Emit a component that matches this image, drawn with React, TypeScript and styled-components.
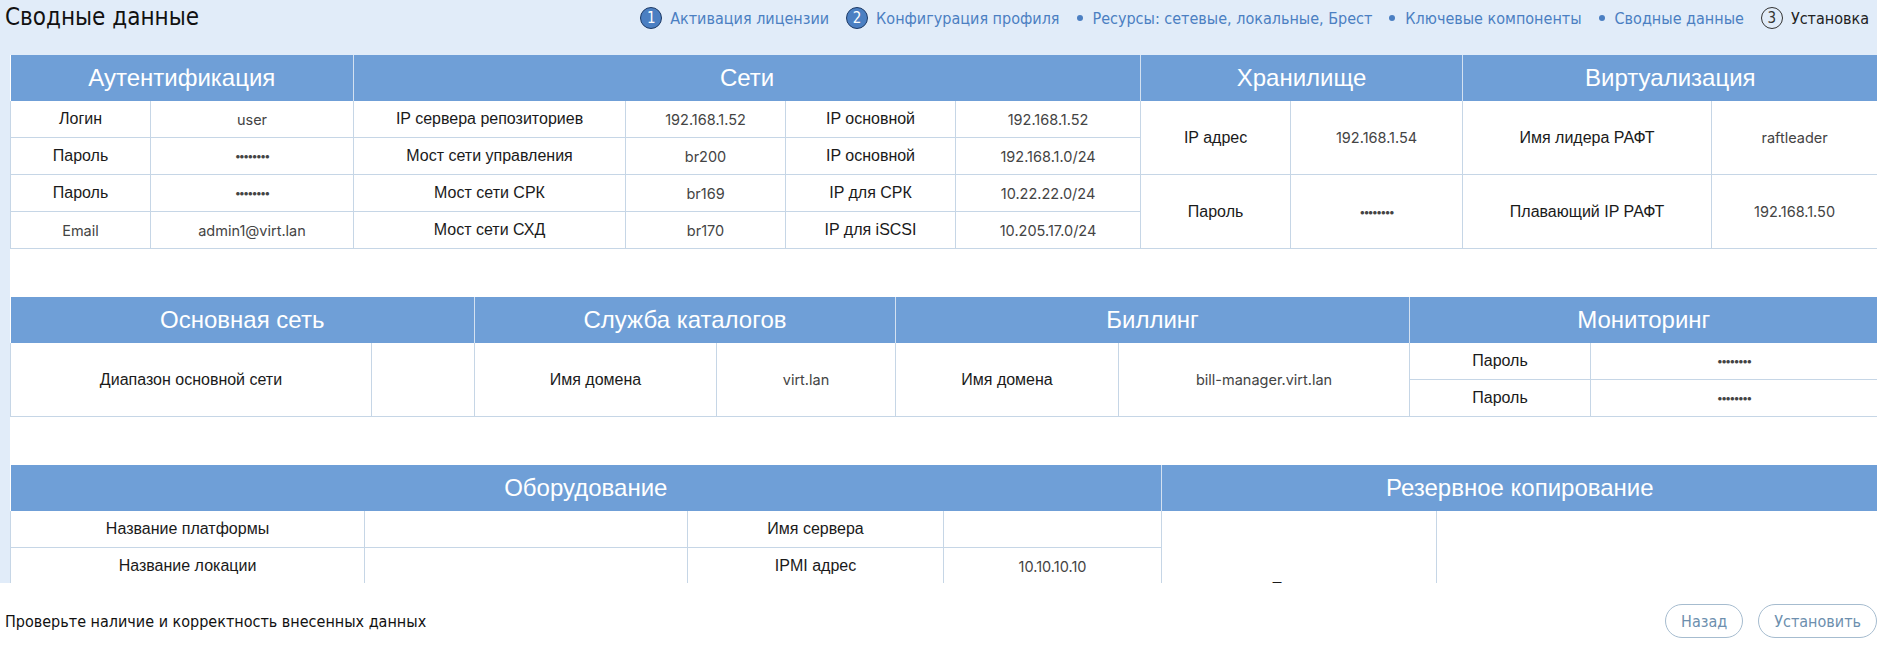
import styled, { createGlobalStyle } from 'styled-components';

type CellKind = 'label' | 'value' | 'secret' | 'empty';

interface CellType {
  text?: string;
  kind: CellKind;
  rowSpan?: number;
}

interface GroupType {
  title: string;
  span: number;
}

interface TableType {
  widths: number[];
  groups: GroupType[];
  rows: CellType[][];
}

const SECRET = '••••••••';

const L = (text: string, rowSpan?: number): CellType => ({ text, kind: 'label', rowSpan });
const V = (text: string, rowSpan?: number): CellType => ({ text, kind: 'value', rowSpan });
const S = (rowSpan?: number): CellType => ({ text: SECRET, kind: 'secret', rowSpan });
const E = (rowSpan?: number): CellType => ({ kind: 'empty', rowSpan });

const steps = [
  { type: 'done', num: '1', text: 'Активация лицензии' },
  { type: 'done', num: '2', text: 'Конфигурация профиля' },
  { type: 'sub', text: 'Ресурсы: сетевые, локальные, Брест' },
  { type: 'sub', text: 'Ключевые компоненты' },
  { type: 'sub', text: 'Сводные данные' },
  { type: 'next', num: '3', text: 'Установка' },
];

const tables: TableType[] = [
  {
    widths: [140, 203, 272, 160, 170, 185, 150, 172, 249, 166],
    groups: [
      { title: 'Аутентификация', span: 2 },
      { title: 'Сети', span: 4 },
      { title: 'Хранилище', span: 2 },
      { title: 'Виртуализация', span: 2 },
    ],
    rows: [
      [
        L('Логин'), V('user'), L('IP сервера репозиториев'), V('192.168.1.52'),
        L('IP основной'), V('192.168.1.52'), L('IP адрес', 2), V('192.168.1.54', 2),
        L('Имя лидера РАФТ', 2), V('raftleader', 2),
      ],
      [L('Пароль'), S(), L('Мост сети управления'), V('br200'), L('IP основной'), V('192.168.1.0/24')],
      [
        L('Пароль'), S(), L('Мост сети СРК'), V('br169'), L('IP для СРК'), V('10.22.22.0/24'),
        L('Пароль', 2), S(2), L('Плавающий IP РАФТ', 2), V('192.168.1.50', 2),
      ],
      [V('Email'), V('admin1@virt.lan'), L('Мост сети СХД'), V('br170'), L('IP для iSCSI'), V('10.205.17.0/24')],
    ],
  },
  {
    widths: [361, 103, 242, 179, 223, 291, 181, 287],
    groups: [
      { title: 'Основная сеть', span: 2 },
      { title: 'Служба каталогов', span: 2 },
      { title: 'Биллинг', span: 2 },
      { title: 'Мониторинг', span: 2 },
    ],
    rows: [
      [
        L('Диапазон основной сети', 2), E(2), L('Имя домена', 2), V('virt.lan', 2),
        L('Имя домена', 2), V('bill-manager.virt.lan', 2), L('Пароль'), S(),
      ],
      [L('Пароль'), S()],
    ],
  },
  {
    widths: [354, 323, 256, 218, 275, 441],
    groups: [
      { title: 'Оборудование', span: 4 },
      { title: 'Резервное копирование', span: 2 },
    ],
    rows: [
      [L('Название платформы'), E(), L('Имя сервера'), E(), L('Пароль', 4), S(4)],
      [L('Название локации'), E(), L('IPMI адрес'), V('10.10.10.10')],
      [L('IPMI логин'), V('admin'), L('IPMI пароль'), S()],
      [L('Модель сервера'), E(), L('Серийный номер'), E()],
    ],
  },
];

function App() {
  return (
    <Page>
      <GlobalStyle />
      <TopBar>
        <PageTitle>Сводные данные</PageTitle>
        <Steps>
          {steps.map((step) => (
            <Step key={step.text}>
              {step.type === 'sub' ? <Dot /> : <StepNum $next={step.type === 'next'}>{step.num}</StepNum>}
              <StepText $next={step.type === 'next'}>{step.text}</StepText>
            </Step>
          ))}
        </Steps>
      </TopBar>
      <Body>
        <Content>
          {tables.map((table, i) => (
            <Table key={i}>
              <colgroup>
                {table.widths.map((w, j) => (
                  <col key={j} style={{ width: w }} />
                ))}
              </colgroup>
              <thead>
                <tr>
                  {table.groups.map((g) => (
                    <Th key={g.title} colSpan={g.span}>
                      {g.title}
                    </Th>
                  ))}
                </tr>
              </thead>
              <tbody>
                {table.rows.map((row, r) => (
                  <tr key={r}>
                    {row.map((cell, c) => (
                      <Td key={c} $kind={cell.kind} $tall={(cell.rowSpan ?? 1) > 2} rowSpan={cell.rowSpan}>
                        {cell.text}
                      </Td>
                    ))}
                  </tr>
                ))}
              </tbody>
            </Table>
          ))}
        </Content>
      </Body>
      <Footer>
        <Hint>Проверьте наличие и корректность внесенных данных</Hint>
        <Buttons>
          <Button>Назад</Button>
          <Button>Установить</Button>
        </Buttons>
      </Footer>
    </Page>
  );
}

const GlobalStyle = createGlobalStyle`
  html, body, #root {
    margin: 0;
    height: 100%;
  }
  body {
    font-family: "DejaVu Sans Condensed", "DejaVu Sans", sans-serif;
    font-stretch: condensed;
    overflow: hidden;
  }
`;

const Page = styled.div`
  display: flex;
  flex-direction: column;
  height: 100vh;
  background: #ffffff;
`;

const TopBar = styled.div`
  display: flex;
  align-items: flex-start;
  justify-content: space-between;
  height: 55px;
  padding: 4px 8px 0 5px;
  box-sizing: border-box;
  background: #e1ecf9;
`;

const PageTitle = styled.div`
  font-size: 24px;
  color: #111;
  line-height: 26px;
`;

const Steps = styled.div`
  display: flex;
  align-items: center;
  gap: 17px;
  padding-top: 3px;
`;

const Step = styled.div`
  display: flex;
  align-items: center;
  gap: 8px;
`;

const StepNum = styled.span<{ $next?: boolean }>`
  display: inline-flex;
  align-items: center;
  justify-content: center;
  width: 22px;
  height: 22px;
  border-radius: 50%;
  box-sizing: border-box;
  border: 1px solid ${(p) => (p.$next ? '#333' : '#1d3a66')};
  background: ${(p) => (p.$next ? 'transparent' : '#4b7fc2')};
  color: ${(p) => (p.$next ? '#333' : '#fff')};
  font-size: 15px;
`;

const Dot = styled.span`
  width: 6px;
  height: 6px;
  border-radius: 50%;
  background: #4b7fc2;
  margin-right: 2px;
`;

const StepText = styled.span<{ $next?: boolean }>`
  font-size: 16px;
  color: ${(p) => (p.$next ? '#222' : '#4b7fc2')};
`;

const Body = styled.div`
  flex: 1;
  min-height: 0;
  display: flex;
  background: #e1ecf9;
  padding-left: 10px;
`;

const Content = styled.div`
  flex: 1;
  display: flex;
  flex-direction: column;
  gap: 48px;
  background: #ffffff;
  overflow: hidden;
`;

const Table = styled.table`
  width: 1867px;
  flex-shrink: 0;
  table-layout: fixed;
  border-collapse: collapse;
  font-family: "Liberation Sans", Arial, sans-serif;
  font-stretch: normal;
`;

const Th = styled.th`
  height: 46px;
  padding: 0;
  background: #6f9fd7;
  color: #ffffff;
  font-weight: 400;
  font-size: 24px;
  border-left: 1px solid #d3e1f1;
  &:first-child {
    border-left: none;
  }
`;

const Td = styled.td<{ $kind: CellKind; $tall?: boolean }>`
  height: 36px;
  padding: ${(p) => (p.$tall ? '8px 6px 0' : '0 6px')};
  text-align: center;
  border: 1px solid #c6d6e6;
  border-top: none;
  color: ${(p) => (p.$kind === 'label' ? '#1a1a1a' : '#444')};
  font-family: ${(p) =>
    p.$kind === 'label' ? '"Liberation Sans", Arial, sans-serif' : 'Inter, "Noto Sans", sans-serif'};
  font-size: ${(p) => (p.$kind === 'secret' ? '11px' : p.$kind === 'label' ? '16px' : '14.5px')};
  font-weight: ${(p) => (p.$kind === 'secret' ? 700 : 400)};
  letter-spacing: ${(p) => (p.$kind === 'secret' ? '-1px' : 'normal')};
  white-space: nowrap;
  overflow: hidden;
`;

const Footer = styled.div`
  display: flex;
  align-items: center;
  justify-content: space-between;
  height: 63px;
  flex-shrink: 0;
  box-sizing: border-box;
  padding: 13px 0 0 5px;
  background: #ffffff;
`;

const Hint = styled.div`
  font-size: 16px;
  color: #111;
`;

const Buttons = styled.div`
  display: flex;
  gap: 15px;
`;

const Button = styled.button`
  height: 34px;
  padding: 0 15px;
  border: 1px solid #a6bccf;
  border-radius: 17px;
  background: #ffffff;
  color: #6d8fae;
  font-family: "DejaVu Sans Condensed", "DejaVu Sans", sans-serif;
  font-stretch: condensed;
  font-size: 16px;
`;

export default App;
